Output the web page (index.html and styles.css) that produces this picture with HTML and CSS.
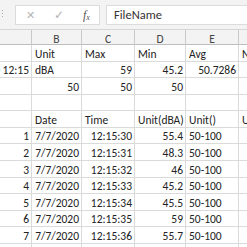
FILE: index.html
```html
<!DOCTYPE html>
<html lang="en">
<head>
  <meta charset="UTF-8" />
  <title>Sheet</title>
  <link rel="stylesheet" href="styles.css">
</head>
<body>

  <div class="formula-bar">
    <div class="grip"><i></i><i></i><i></i></div>
    <div class="fx-box">
      <span class="cancel">✕</span>
      <span class="enter">✓</span>
      <span class="fx">f<sub>x</sub></span>
    </div>
    <div class="formula-input">FileName</div>
  </div>

  <div class="sheet" id="sheet">
    <div class="col-head"></div>
    <div class="col-head">B</div>
    <div class="col-head">C</div>
    <div class="col-head">D</div>
    <div class="col-head">E</div>
    <div class="col-head"></div>
  </div>

  <script>
    const rows = [
      ['', 'Unit', 'Max', 'Min', 'Avg', 'N'],
      ['7/7/2020 12:15', 'dBA', '59', '45.2', '50.7286', ''],
      ['', '50', '50', '50', '', ''],
      ['', '', '', '', '', ''],
      ['', 'Date', 'Time', 'Unit(dBA)', 'Unit()', 'U'],
      ['1', '7/7/2020', '12:15:30', '55.4', '50-100', ''],
      ['2', '7/7/2020', '12:15:31', '48.3', '50-100', ''],
      ['3', '7/7/2020', '12:15:32', '46', '50-100', ''],
      ['4', '7/7/2020', '12:15:33', '45.2', '50-100', ''],
      ['5', '7/7/2020', '12:15:34', '45.5', '50-100', ''],
      ['6', '7/7/2020', '12:15:35', '59', '50-100', ''],
      ['7', '7/7/2020', '12:15:36', '55.7', '50-100', ''],
      ['', '', '', '', '', '']
    ];

    const sheet = document.getElementById('sheet');
    rows.forEach(row => {
      row.forEach(value => {
        const div = document.createElement('div');
        div.className = 'cell';
        if (/^[\d.\/: ]+$/.test(value)) div.classList.add('num');
        div.innerHTML = `<span>${value}</span>`;
        sheet.appendChild(div);
      });
    });
  </script>

</body>
</html>
```

FILE: styles.css
```css
body {
  margin: 0;
  background: white;
  font-family: Carlito, "Liberation Sans", sans-serif;
  color: #222;
  width: 247px;
  height: 247px;
  overflow: hidden;
}

.formula-bar {
  height: 30px;
  background: #f3f3f3;
  border-bottom: 1px solid #d6d6d6;
  display: flex;
  align-items: flex-start;
  padding-top: 5px;
  box-sizing: border-box;
}

.grip {
  width: 15px;
  display: flex;
  flex-direction: column;
  align-items: center;
  gap: 2px;
  padding-top: 5px;
  margin-right: -8px;
  margin-left: -5px;
}

.grip i {
  width: 1px;
  height: 1px;
  background: #aaa;
}

.fx-box {
  margin-left: 13px;
  width: 85px;
  height: 20px;
  background: white;
  border: 1px solid #dcdcdc;
  box-sizing: border-box;
  display: flex;
  align-items: center;
  font-size: 12px;
}

.cancel {
  color: #b5b5b5;
  margin-left: 10px;
  font-size: 11px;
}

.enter {
  color: #b5b5b5;
  margin-left: 19px;
  font-size: 12px;
}

.fx {
  margin-left: 19px;
  color: #555;
  font-family: "Liberation Serif", serif;
  font-style: italic;
  font-size: 12px;
}

.fx sub {
  font-size: 8px;
  vertical-align: -1px;
}

.formula-input {
  flex: 1;
  margin-left: 6px;
  height: 20px;
  background: white;
  border: 1px solid #dcdcdc;
  border-right: none;
  box-sizing: border-box;
  font-size: 12.5px;
  color: #333;
  padding-left: 7px;
  line-height: 18px;
}

.sheet {
  display: grid;
  grid-template-columns: 32px 50px 53px 51px 53px 40px;
  grid-template-rows: 15px;
  grid-auto-rows: 16.58px;
}

.col-head {
  background: #f3f3f3;
  border-right: 1px solid #c9c9c9;
  border-bottom: 1px solid #bdbdbd;
  color: #444;
  font-size: 11.5px;
  text-align: center;
  line-height: 15px;
  padding-top: 2px;
  box-sizing: border-box;
  overflow: hidden;
}

.cell {
  border-right: 1px solid #dadada;
  border-bottom: 1px solid #dadada;
  font-size: 11.5px;
  line-height: 13px;
  display: flex;
  align-items: flex-end;
  justify-content: flex-start;
  padding: 0 2px 0 3px;
  overflow: hidden;
  white-space: nowrap;
}

.cell.num {
  justify-content: flex-end;
}
```
